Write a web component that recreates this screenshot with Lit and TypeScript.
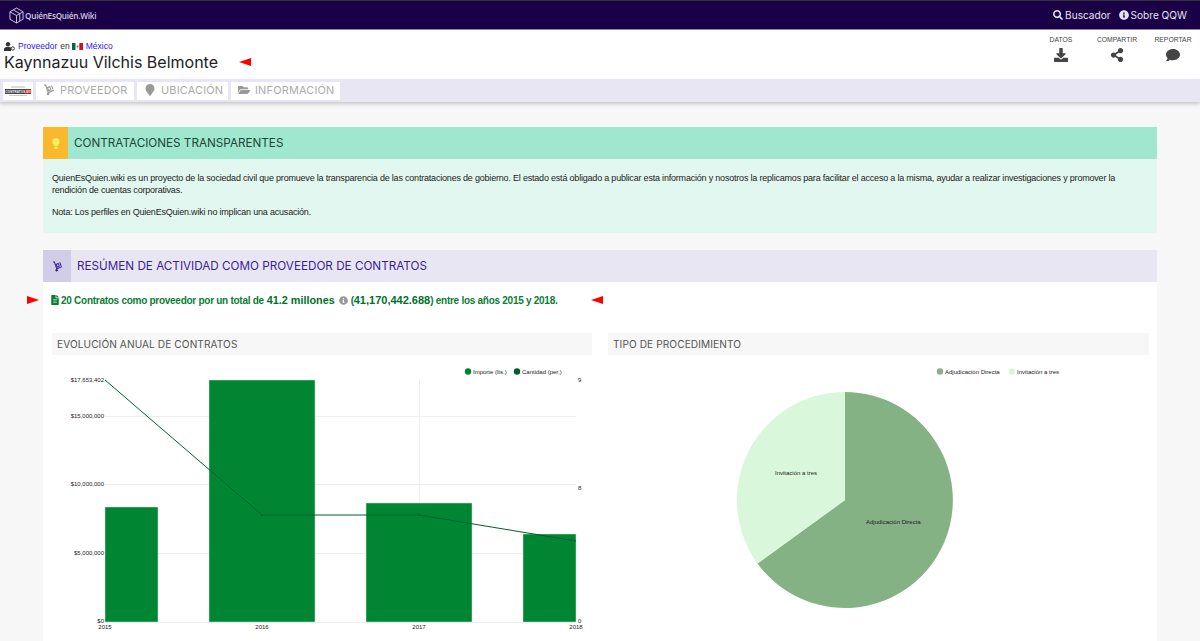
import { LitElement, html, css, svg } from "lit";
import { customElement } from "lit/decorators.js";

const P = {
  search: ["0 0 512 512", "M505 442.7L405.3 343c-4.5-4.5-10.6-7-17-7H372c27.6-35.3 44-79.7 44-128C416 93.1 322.9 0 208 0S0 93.1 0 208s93.1 208 208 208c48.3 0 92.7-16.4 128-44v16.3c0 6.4 2.5 12.5 7 17l99.7 99.7c9.4 9.4 24.6 9.4 33.9 0l28.3-28.3c9.4-9.4 9.4-24.6.1-34zM208 336c-70.7 0-128-57.2-128-128 0-70.7 57.2-128 128-128 70.7 0 128 57.2 128 128 0 70.7-57.2 128-128 128z"],
  info: ["0 0 512 512", "M256 8C119 8 8 119.1 8 256c0 137 111 248 248 248s248-111 248-248C504 119.1 393 8 256 8zm0 110c23.2 0 42 18.8 42 42s-18.8 42-42 42-42-18.8-42-42 18.8-42 42-42zm56 254c0 6.6-5.4 12-12 12h-88c-6.6 0-12-5.4-12-12v-24c0-6.6 5.4-12 12-12h12v-64h-12c-6.6 0-12-5.4-12-12v-24c0-6.6 5.4-12 12-12h64c6.6 0 12 5.4 12 12v100h12c6.6 0 12 5.4 12 12v24z"],
  download: ["0 0 512 512", "M216 0h80c13.3 0 24 10.7 24 24v168h87.7c17.8 0 26.7 21.5 14.1 34.1L269.7 378.3c-7.5 7.5-19.8 7.5-27.3 0L90.1 226.1c-12.6-12.6-3.7-34.1 14.1-34.1H192V24c0-13.3 10.7-24 24-24zm296 376v112c0 13.3-10.7 24-24 24H24c-13.3 0-24-10.7-24-24V376c0-13.3 10.7-24 24-24h146.7l49 49c20.1 20.1 52.5 20.1 72.6 0l49-49H488c13.3 0 24 10.7 24 24z"],
  share: ["0 0 448 512", "M352 320c-22.6 0-43.4 7.8-59.8 20.9l-102.5-64.1a96.6 96.6 0 0 0 0-41.7l102.5-64.1C308.6 184.2 329.4 192 352 192c53 0 96-43 96-96S405 0 352 0s-96 43-96 96c0 7.2.8 14.1 2.3 20.9l-102.5 64.1C139.4 167.8 118.6 160 96 160c-53 0-96 43-96 96s43 96 96 96c22.6 0 43.4-7.8 59.8-20.9l102.5 64.1A96.3 96.3 0 0 0 256 416c0 53 43 96 96 96s96-43 96-96-43-96-96-96z"],
  comment: ["0 0 512 512", "M256 32C114.6 32 0 125.1 0 240c0 49.6 21.4 95 57 130.7C44.5 421.1 2.7 466 2.2 466.5c-2.2 2.3-2.8 5.7-1.5 8.7S4.8 480 8 480c66.3 0 116-31.8 140.6-51.4 32.7 12.3 69 19.4 107.4 19.4 141.4 0 256-93.1 256-208S397.4 32 256 32z"],
  file: ["0 0 384 512", "M224 136V0H24C10.7 0 0 10.7 0 24v464c0 13.3 10.7 24 24 24h336c13.3 0 24-10.7 24-24V160H248c-13.2 0-24-10.8-24-24zm64 236c0 6.6-5.4 12-12 12H108c-6.6 0-12-5.4-12-12v-8c0-6.6 5.4-12 12-12h168c6.6 0 12 5.4 12 12v8zm0-64c0 6.6-5.4 12-12 12H108c-6.6 0-12-5.4-12-12v-8c0-6.6 5.4-12 12-12h168c6.6 0 12 5.4 12 12v8zm0-72v8c0 6.6-5.4 12-12 12H108c-6.6 0-12-5.4-12-12v-8c0-6.6 5.4-12 12-12h168c6.6 0 12 5.4 12 12zm96-114.1v6.1H256V0h6.1c6.4 0 12.5 2.5 17 7l97.9 98c4.5 4.5 7 10.6 7 16.9z"],
  folder: ["0 0 576 512", "M572.694 292.093L500.27 416.248A63.997 63.997 0 0 1 444.989 448H45.025c-18.523 0-30.064-20.093-20.731-36.093l72.424-124.155A64 64 0 0 1 152 256h399.964c18.523 0 30.064 20.093 20.73 36.093zM152 224h328v-48c0-26.51-21.49-48-48-48H272l-64-64H48C21.49 64 0 85.49 0 112v278.046l69.077-118.418C86.214 242.25 117.989 224 152 224z"],
  bulb: ["0 0 352 512", "M96.06 454.35c.01 6.29 1.87 12.45 5.36 17.69l17.09 25.69a31.99 31.99 0 0 0 26.64 14.28h61.71a31.99 31.99 0 0 0 26.64-14.28l17.09-25.69a31.989 31.989 0 0 0 5.36-17.69l.04-38.35H96.01l.05 38.35zM0 176c0 44.37 16.45 84.85 43.56 115.78 16.52 18.85 42.36 58.23 52.21 91.45.04.26.07.52.11.78h160.24c.04-.26.07-.51.11-.78 9.85-33.22 35.69-72.6 52.21-91.45C335.55 260.85 352 220.37 352 176 352 78.61 272.91-.3 175.45 0 73.44.31 0 82.97 0 176z"],
  marker: ["0 0 384 512", "M172.268 501.67C26.97 291.031 0 268.413 0 192 0 85.961 85.961 0 192 0s192 85.961 192 192c0 76.413-26.97 99.031-172.268 309.67-9.535 13.774-29.93 13.773-39.464 0z"],
} as const;

const icon = (n: keyof typeof P, cls: string) =>
  html`<svg class=${cls} viewBox=${P[n][0]} fill="currentColor"><path d=${P[n][1]}></path></svg>`;

const dolly = (cls: string) => html`<svg class=${cls} viewBox="0 0 16 16" fill="none" stroke="currentColor" stroke-width="1.5" stroke-linecap="round">
  <path d="M2 1.5h1.5L7 11.5l7-3"></path><circle cx="6.8" cy="13.4" r="1.7" fill="currentColor" stroke="none"></circle>
  <path d="M6 5l1.5 4M9 3.5l1.5 4M6 5l3-1.5M7.5 9l3-1.5M11.5 2.5l1.5 4"></path></svg>`;

const arrowL = html`<svg class="arrow" viewBox="0 0 12 8"><path d="M0 4L12 0v8z" fill="#f00"></path></svg>`;
const arrowR = html`<svg class="arrow" viewBox="0 0 12 8"><path d="M12 4L0 0v8z" fill="#f00"></path></svg>`;

const T = (x: number, y: number, s: string, a = "start") =>
  svg`<text x=${x} y=${y} text-anchor=${a} font-size="6" fill="#222" font-family="Liberation Sans, sans-serif">${s}</text>`;

@customElement("app-root")
export class AppRoot extends LitElement {
  static styles = css`
    :host { display: block; height: 641px; overflow: hidden; background: #f7f7f7; font-family: "Liberation Sans", Arial, sans-serif; color: #222; }
    svg { display: block; flex: none; }
    .nav { background: #1a0047; border-top: 1px solid #333; border-bottom: 1px solid #8c86a4; height: 28px; display: flex; align-items: center; justify-content: space-between; padding: 0 13px 0 9px; color: #e6e3f0; }
    .brand { display: flex; align-items: center; gap: 1px; font: 600 8.2px "Open Sans", sans-serif; letter-spacing: -0.25px; color: #d0cce0; }
    .brand svg { width: 15px; height: 17px; }
    .links { display: flex; gap: 8px; font: 400 10.1px/14px "Inter", sans-serif; }
    .links span { display: flex; align-items: center; gap: 2px; }
    .i11 { width: 10px; height: 10px; }
    .head { background: #fff; height: 49px; display: flex; justify-content: space-between; padding: 0 0 0 4px; }
    .crumb { display: flex; align-items: center; gap: 3px; font-size: 8.5px; line-height: 11px; margin-top: 11px; color: #333; }
    .crumb b { font-weight: 400; color: #2f14f0; }
    .usr { width: 11px; height: 9px; }
    .flag { width: 11px; height: 7px; margin-left: -1px; }
    .name { display: flex; align-items: center; gap: 21px; font: 400 16px/20px "Inter", "Open Sans", sans-serif; color: #222; }
    .arrow { width: 12px; height: 8px; }
    .acts { display: flex; padding-top: 6px; margin-right: -1px; }
    .act { display: flex; flex-direction: column; align-items: center; width: 56px; font-size: 6.8px; line-height: 8px; color: #444; gap: 4px; }
    .act svg { height: 14px; width: 14px; color: #444; }
    .tabs { height: 23px; background: #e9e6f3; display: flex; gap: 3px; padding: 3px 0 0 3px; box-sizing: border-box; box-shadow: 0 2px 4px rgba(0,0,0,.2); }
    .tab { height: 18px; padding: 0 6px 2px 7px; box-sizing: border-box; background: #fff; display: flex; align-items: center; gap: 5px; font: 400 10.9px "Inter", sans-serif; letter-spacing: .2px; color: #ababab; }
    .tab svg { width: 12px; height: 12px; color: #999; }
    .tab.w1 { width: 98px; }
    .tab.w2 { width: 91px; }
    .tab.w3 { width: 109px; }
    .logo { width: 30px; padding: 0; justify-content: center; }
    .logo svg { width: 28px; height: 14px; }
    .main { padding: 25px 43px 0; }
    .bar { height: 32px; padding-bottom: 1px; box-sizing: border-box; display: flex; align-items: center; }
    .bar .ic { width: 25px; height: 32px; margin-bottom: -1px; display: flex; align-items: center; justify-content: center; }
    .bar h2 { margin: 0 0 0 6px; font: 400 11.7px "Inter", sans-serif; }
    .alert .bar { background: #9fe8cf; }
    .alert .ic { background: #f9b92f; color: #fbee5c; }
    .alert .ic svg { width: 8px; height: 11px; }
    .alert h2 { color: #1f4338; }
    .alert .txt { background: #e2f7ef; padding: 13px 9px 17px; height: 44px; font-size: 9px; line-height: 12px; letter-spacing: -0.2px; color: #222; }
    .alert p { margin: 0 0 10px; }
    .card { background: #fff; margin-top: 17px; height: 400px; }
    .sec .bar { background: #e9e6f3; }
    .sec .ic { background: #d2cde6; color: #3a1f96; width: 28px; }
    .sec .ic svg { width: 11px; height: 11px; }
    .sec h2 { color: #3a1f96; }
    .sum { display: flex; align-items: center; height: 12px; margin: 12px 0 0 -16px; font-size: 10px; font-weight: 700; letter-spacing: -0.27px; color: #0a7d34; white-space: pre; }
    .sum .arrow { margin-right: 12px; }
    .sum .arrow.end { margin: 0 0 0 34px; }
    .sum b { font-size: 10.8px; letter-spacing: 0; color: #00702a; margin: 0 4px 0 3px; }
    .sum b.n { margin: 0; font-size: 11px; }
    .sum .f { width: 8px; height: 10px; margin-right: 2px; color: #0a7d34; }
    .sum .inf { width: 9px; height: 9px; color: #999; margin: 0 3px 0 0; }
    .cols { display: grid; grid-template-columns: 540px 541px; gap: 16px; padding: 0 8px 0 9px; margin-top: 27px; }
    h3 { margin: 0; height: 22px; background: #f7f7f7; display: flex; align-items: center; padding-left: 5px; font: 400 10.1px "Inter", sans-serif; color: #555; letter-spacing: .1px; }
    .chart { width: 100%; height: 286px; }
    .lt { font: 700 2.9px "Liberation Sans", sans-serif; fill: #fff; }
  `;

  render() {
    return html`
      <div class="nav">
        <div class="brand">
          <svg viewBox="0 0 16 18" fill="none" stroke="#d0cce0" stroke-width="1"><path d="M8 1l7 4v8l-7 4-7-4V5zM1 5l7 4 7-4M8 9v8M4.5 3l7 4v8"></path></svg>
          QuiénEsQuién.Wiki
        </div>
        <div class="links">
          <span>${icon("search", "i11")}Buscador</span>
          <span>${icon("info", "i11")}Sobre QQW</span>
        </div>
      </div>
      <div class="head">
        <div>
          <div class="crumb">
            <svg class="usr" viewBox="0 0 11 9" fill="#333"><circle cx="4" cy="2.2" r="2.2"></circle><path d="M0 9V7.2C0 5.6 1.4 5 4 5s3 .6 3 1v3z"></path><circle cx="8.8" cy="6.5" r="1.6" fill="none" stroke="#333"></circle></svg>
            <b>Proveedor</b> en
            <svg class="flag" viewBox="0 0 11 7"><rect width="3.7" height="7" fill="#006847"></rect><rect x="3.7" width="3.6" height="7" fill="#fff"></rect><rect x="7.3" width="3.7" height="7" fill="#ce1126"></rect><circle cx="5.5" cy="3.5" r="1" fill="#8a6a3a"></circle></svg>
            <b>México</b>
          </div>
          <div class="name">Kaynnazuu Vilchis Belmonte ${arrowL}</div>
        </div>
        <div class="acts">
          <div class="act">DATOS${icon("download", "")}</div>
          <div class="act">COMPARTIR${icon("share", "")}</div>
          <div class="act">REPORTAR${icon("comment", "")}</div>
        </div>
      </div>
      <div class="tabs">
        <div class="tab logo"><svg viewBox="0 0 28 14"><rect x="1" y="5" width="20" height="5" fill="#444"></rect><rect x="21" y="5" width="6" height="5" fill="#b22"></rect><text class="lt" x="1.5" y="8.6">CONTRATOS.MX</text><rect x="7" y="2.5" width="14" height="1" fill="#bbb"></rect><rect x="5" y="11" width="18" height="1" fill="#ccc"></rect></svg></div>
        <div class="tab w1">${dolly("")}PROVEEDOR</div>
        <div class="tab w2">${icon("marker", "")}UBICACIÓN</div>
        <div class="tab w3">${icon("folder", "")}INFORMACIÓN</div>
      </div>
      <div class="main">
        <div class="alert">
          <div class="bar"><div class="ic">${icon("bulb", "")}</div><h2>CONTRATACIONES TRANSPARENTES</h2></div>
          <div class="txt">
            <p>QuienEsQuien.wiki es un proyecto de la sociedad civil que promueve la transparencia de las contrataciones de gobierno. El estado está obligado a publicar esta información y nosotros la replicamos para facilitar el acceso a la misma, ayudar a realizar investigaciones y promover la rendición de cuentas corporativas.</p>
            <p>Nota: Los perfiles en QuienEsQuien.wiki no implican una acusación.</p>
          </div>
        </div>
        <div class="card sec">
          <div class="bar"><div class="ic">${dolly("")}</div><h2>RESÚMEN DE ACTIVIDAD COMO PROVEEDOR DE CONTRATOS</h2></div>
          <div class="sum">
            ${arrowR}${icon("file", "f")}<span>20 Contratos como proveedor por un total de</span><b>41.2 millones</b>${icon("info", "inf")}<span>(</span><b class="n">41,170,442.688</b><span>) entre los años 2015 y 2018.</span>
            <svg class="arrow end" viewBox="0 0 12 8"><path d="M0 4L12 0v8z" fill="#f00"></path></svg>
          </div>
          <div class="cols">
            <div>
              <h3>EVOLUCIÓN ANUAL DE CONTRATOS</h3>
              <svg class="chart" viewBox="52 355 540 286">
                <g stroke="#eee" stroke-width="1"><path d="M105 416.5H576M105 484.5H576M105 553.5H576M105 622.5H576M419.5 380V622"></path></g>
                <g fill="#008533" stroke="#cfe6d6" stroke-width=".5">
                  <rect x="105" y="507" width="53" height="115"></rect>
                  <rect x="209" y="380" width="106" height="242"></rect>
                  <rect x="366" y="503" width="106" height="119"></rect>
                  <rect x="523" y="534" width="53" height="88"></rect>
                </g>
                <path d="M105 380L262 515L419 515L576 541" fill="none" stroke="#00602a" stroke-width="1"></path>
                <circle cx="262" cy="515" r="1" fill="#00602a"></circle><circle cx="419" cy="515" r="1" fill="#00602a"></circle>
                ${T(104, 382, "$17,653,402", "end")}${T(104, 418, "$15,000,000", "end")}${T(104, 486, "$10,000,000", "end")}${T(104, 555, "$5,000,000", "end")}${T(104, 623, "$0", "end")}
                ${T(578, 382, "9")}${T(578, 490, "8")}${T(578, 623, "0")}
                ${T(105, 629, "2015", "middle")}${T(262, 629, "2016", "middle")}${T(419, 629, "2017", "middle")}${T(576, 629, "2018", "middle")}
                <circle cx="468" cy="371.5" r="3.2" fill="#008533"></circle>${T(473, 373.5, "Importe (lts.)")}
                <circle cx="517" cy="371.5" r="3.2" fill="#00602a"></circle>${T(522, 373.5, "Cantidad (per.)")}
              </svg>
            </div>
            <div>
              <h3>TIPO DE PROCEDIMIENTO</h3>
              <svg class="chart" viewBox="608 355 541 286">
                <path d="M845 500V392A108 108 0 1 1 757.5 563.5Z" fill="#85b285"></path>
                <path d="M845 500L757.5 563.5A108 108 0 0 1 845 392Z" fill="#d9f8db"></path>
                ${T(775, 475, "Invitación a tres")}${T(866, 524, "Adjudicación Directa")}
                <circle cx="940" cy="371.5" r="3.2" fill="#85b285"></circle>${T(945, 373.5, "Adjudicación Directa")}
                <circle cx="1012" cy="371.5" r="3.2" fill="#d9f8db"></circle>${T(1017, 373.5, "Invitación a tres")}
              </svg>
            </div>
          </div>
        </div>
      </div>
    `;
  }
}
